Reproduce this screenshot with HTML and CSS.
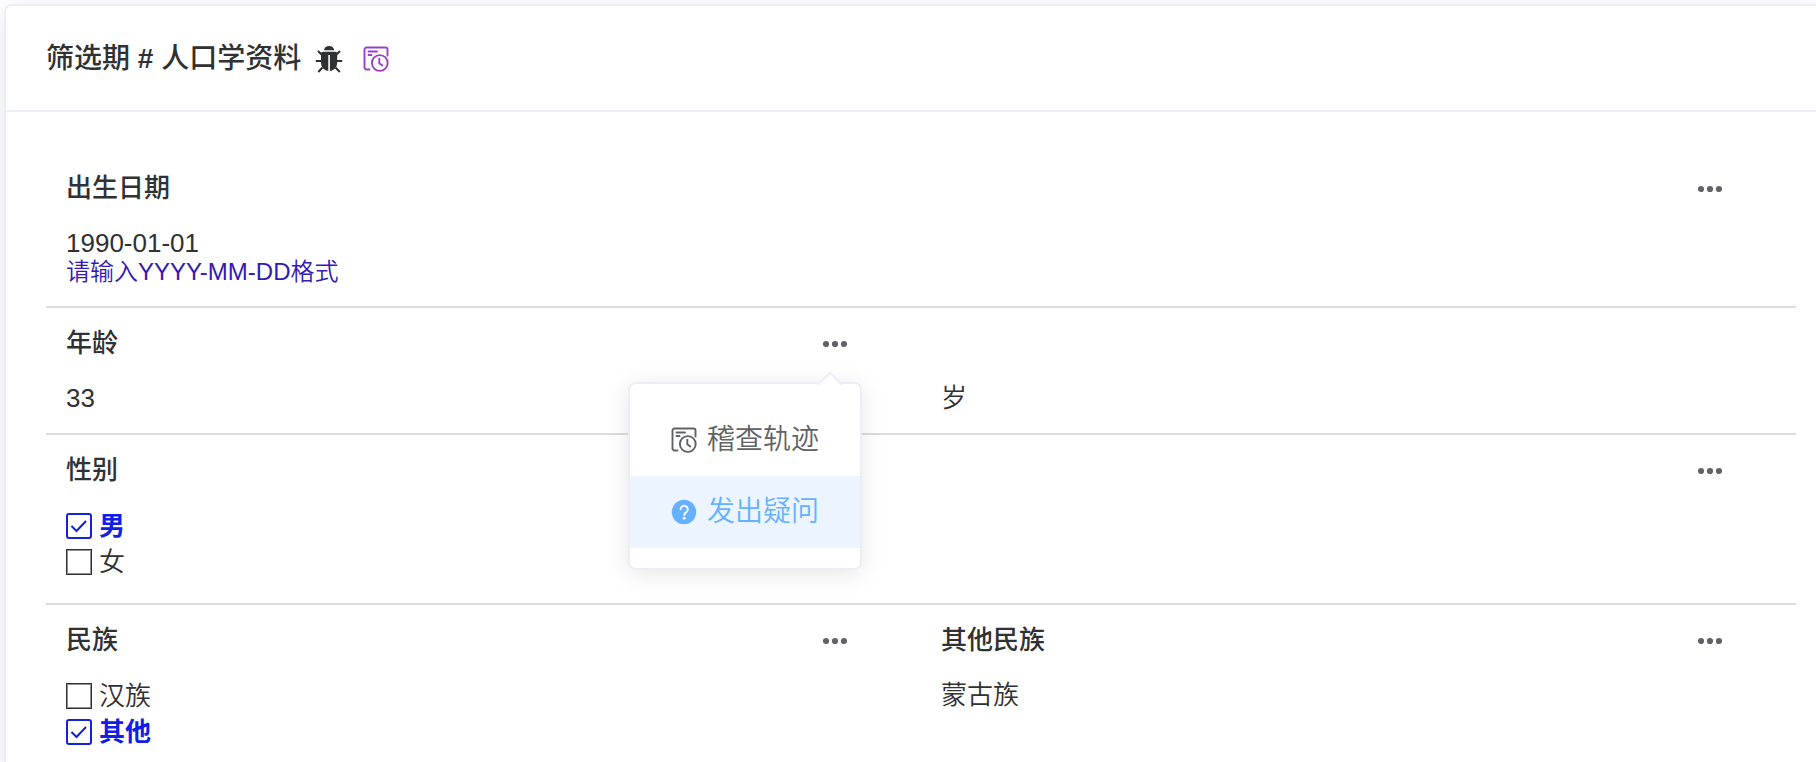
FILE: index.html
```html
<!DOCTYPE html>
<html lang="zh-CN">
<head>
<meta charset="utf-8">
<meta name="viewport" content="width=device-width, initial-scale=1">
<title>筛选期 # 人口学资料</title>
<link rel="stylesheet" href="styles.css">
</head>
<body>
<svg class="sprite" aria-hidden="true">
  <symbol id="dots" viewBox="0 0 24 24"><circle cx="3" cy="13" r="3.1"/><circle cx="12" cy="13" r="3.1"/><circle cx="21" cy="13" r="3.1"/></symbol>
  <symbol id="audit" viewBox="0 0 26 26">
    <g fill="none" stroke="currentColor" stroke-width="1.9" stroke-linecap="round" stroke-linejoin="round">
      <path d="M6.500 23.500H3.500a2 2 0 0 1-2-2v-18a2 2 0 0 1 2-2h19a2 2 0 0 1 2 2v6"/>
      <path d="M5.500 5.500h8.500M5.500 9h3"/>
      <circle cx="16.800" cy="17" r="7.900"/>
      <path d="M16.300 12.600v4.600l3 2.200"/>
    </g>
  </symbol>
</svg>
<main class="card">
  <header class="card-header">
    <h1 class="title">筛选期 <b>#</b> 人口学资料</h1>
    <button class="icon-button" type="button" aria-label="调试">
      <svg class="bug" viewBox="0 0 28 28" aria-hidden="true">
        <path d="M9 5.300a5.200 5.200 0 0 1 10.200 0z" fill="currentColor"/>
        <path d="M6 8.500q0-1.800 1.800-1.800h12.600q1.800 0 1.800 1.800v9.500a8.100 8.100 0 0 1-16.200 0z" fill="currentColor"/>
        <path d="M6.500 9.500 3 6M6 16H.8M7.500 22.500 3.300 27M21.500 9.500 25 6M22 16h5.200M20.500 22.500l4.300 4.500" fill="none" stroke="currentColor" stroke-width="2"/>
        <path d="M14.100 10v16.500" stroke="#fff" stroke-width="1.600"/>
      </svg>
    </button>
    <button class="icon-button audit" type="button" aria-label="稽查轨迹"><svg class="audit-icon" aria-hidden="true"><use href="#audit"/></svg></button>
  </header>

  <div class="form">
    <section class="row">
      <div class="cell">
        <div class="head">
          <h2 class="label">出生日期</h2>
          <button class="more" type="button" aria-label="更多"><svg class="dots"><use href="#dots"/></svg></button>
        </div>
        <p class="value">1990-01-01</p>
        <p class="hint">请输入YYYY-MM-DD格式</p>
      </div>
    </section>

    <section class="row split">
      <div class="cell">
        <div class="head">
          <h2 class="label">年龄</h2>
          <button class="more" type="button" aria-label="更多" aria-expanded="true"><svg class="dots"><use href="#dots"/></svg></button>
          <div class="menu">
            <button class="menu-item" type="button"><svg class="audit-icon" aria-hidden="true"><use href="#audit"/></svg>稽查轨迹</button>
            <button class="menu-item active" type="button">
              <svg class="audit-icon" viewBox="0 0 26 26" aria-hidden="true">
                <circle cx="13" cy="13" r="12.200" fill="currentColor"/>
                <path d="M9.600 10.300a3.600 3.600 0 1 1 5.600 3q-1.900 1.200-1.900 2.700" fill="none" stroke="#fff" stroke-width="1.900" stroke-linecap="round"/>
                <circle cx="13.200" cy="19.200" r="1.400" fill="#fff"/>
              </svg>发出疑问</button>
          </div>
        </div>
        <p class="value">33</p>
      </div>
      <div class="cell">
        <div class="head"></div>
        <p class="value">岁</p>
      </div>
    </section>

    <section class="row">
      <div class="cell">
        <div class="head">
          <h2 class="label">性别</h2>
          <button class="more" type="button" aria-label="更多"><svg class="dots"><use href="#dots"/></svg></button>
        </div>
        <div class="options">
          <label class="option"><input class="box" type="checkbox" checked><span class="option-text">男</span></label>
          <label class="option"><input class="box" type="checkbox"><span class="option-text">女</span></label>
        </div>
      </div>
    </section>

    <section class="row split">
      <div class="cell">
        <div class="head">
          <h2 class="label">民族</h2>
          <button class="more" type="button" aria-label="更多"><svg class="dots"><use href="#dots"/></svg></button>
        </div>
        <div class="options">
          <label class="option"><input class="box" type="checkbox"><span class="option-text">汉族</span></label>
          <label class="option"><input class="box" type="checkbox" checked><span class="option-text">其他</span></label>
        </div>
      </div>
      <div class="cell">
        <div class="head">
          <h2 class="label">其他民族</h2>
          <button class="more" type="button" aria-label="更多"><svg class="dots"><use href="#dots"/></svg></button>
        </div>
        <p class="value">蒙古族</p>
      </div>
    </section>
  </div>
</main>
</body>
</html>
```
FILE: styles.css
```css
* {
  box-sizing: border-box;
}

html {
  overflow: hidden;
}

body {
  margin: 0;
  min-height: 100vh;
  padding: 4px 0 0 4px;
  background: #fff;
  color: #303133;
  font-family: "Liberation Sans", "Noto Sans CJK SC", sans-serif;
  font-size: 26px;
  font-weight: 350;
  line-height: 30px;
}

button {
  margin: 0;
  padding: 0;
  border: 0;
  background: none;
  color: inherit;
  font: inherit;
  cursor: pointer;
}

h1,
h2,
p {
  margin: 0;
}

svg {
  display: block;
}

.sprite {
  position: absolute;
  width: 0;
  height: 0;
}

.card {
  min-height: calc(100vh - 4px);
  border: 2px solid #ebeef5;
  border-width: 2px 0 0 2px;
  border-radius: 8px 0 0 0;
  background: #fff;
  box-shadow: 0 4px 24px rgba(0, 0, 0, 0.1);
}

.card-header {
  display: flex;
  align-items: center;
  padding: 36px 40px 34px;
  border-bottom: 2px solid #ebeef5;
}

.title {
  margin-right: 14px;
  font-size: 28px;
  font-weight: 500;
  line-height: 34px;
}

.icon-button {
  margin-right: 20px;
}

.audit {
  color: #9b3fc4;
}

.bug {
  width: 28px;
  height: 28px;
}

.audit-icon {
  width: 26px;
  height: 26px;
}

.form {
  padding: 41px 20px 0 40px;
}

.row {
  border-bottom: 2px solid #dcdcdc;
}

.split {
  display: grid;
  grid-template-columns: 1fr 1fr;
}

.cell {
  padding: 20px 74px 20px 20px;
}

.head {
  position: relative;
  display: flex;
  align-items: center;
  justify-content: space-between;
  min-height: 30px;
  margin-bottom: 25px;
}

.label {
  font-size: 26px;
  font-weight: 500;
}

.more {
  color: #606266;
}

.dots {
  width: 24px;
  height: 24px;
  fill: currentColor;
}

.hint {
  color: #3519b5;
  font-size: 24px;
  line-height: 28px;
}

.options {
  display: grid;
  gap: 4px;
  padding-bottom: 5px;
}

.option {
  display: flex;
  align-items: center;
  justify-self: start;
  gap: 7px;
  line-height: 32px;
}

.box {
  appearance: none;
  width: 26px;
  height: 26px;
  margin: 0;
  border: 1px solid #303133;
  background: #fff;
  box-shadow: inset 0 0 0 1px #909090;
}

.box:checked {
  border: 2px solid #1522dc;
  border-radius: 3px;
  box-shadow: none;
  background: url("data:image/svg+xml,%3Csvg xmlns='http://www.w3.org/2000/svg' viewBox='0 0 22 22'%3E%3Cpath d='M3.500 11 8.500 16 18 6' fill='none' stroke='%231522dc' stroke-width='2'/%3E%3C/svg%3E") center / 22px 22px no-repeat;
}

.box:checked + .option-text {
  color: #1020e8;
  font-weight: 700;
}

.menu {
  position: absolute;
  top: 54px;
  right: -15px;
  z-index: 1;
  padding: 20px 0;
  border: 2px solid #ebeef5;
  border-radius: 8px;
  background: #fff;
  box-shadow: 0 4px 24px rgba(0, 0, 0, 0.1);
  color: #606266;
  font-size: 28px;
}

.menu::before {
  content: "";
  position: absolute;
  top: -9px;
  right: 21px;
  width: 16px;
  height: 16px;
  border: 2px solid #ebeef5;
  border-width: 2px 0 0 2px;
  background: #fff;
  transform: rotate(45deg);
}

.menu-item {
  display: flex;
  align-items: center;
  gap: 10px;
  width: 100%;
  padding: 0 41px;
  line-height: 72px;
  white-space: nowrap;
}

.menu-item.active {
  background: #ecf5ff;
  color: #66b1ff;
}
```
